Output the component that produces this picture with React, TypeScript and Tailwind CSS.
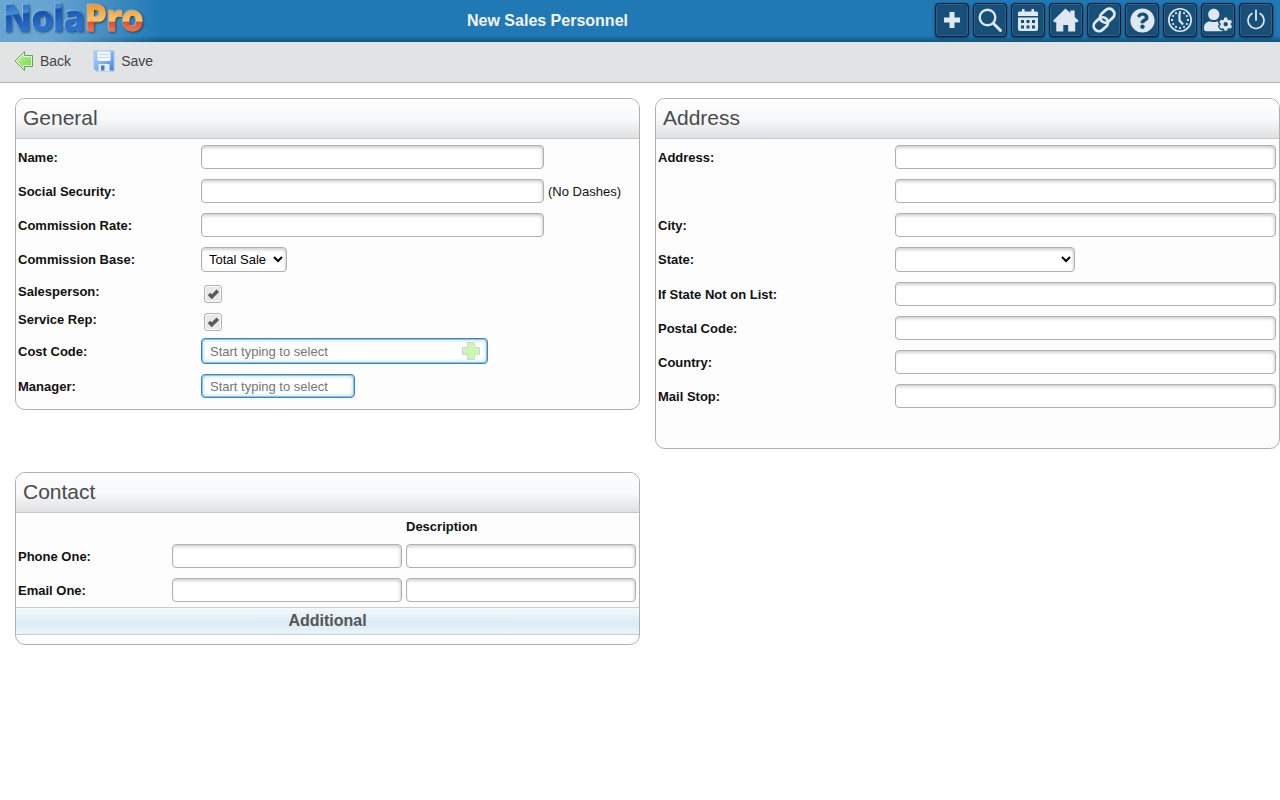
import type { ReactNode } from "react";
import { FaQuestionCircle, FaUserCog } from "react-icons/fa";

const inputClass =
  "h-6 min-w-0 rounded-[4px] border border-[#b0b0b0] bg-white px-2 text-[13px] text-[#222] shadow-[inset_-1px_2px_3px_#d2d2d2] outline-none";
const selectClass =
  "h-[25px] rounded-[4px] border border-[#b0b0b0] bg-white pl-[3px] text-[13px] text-black shadow-[inset_-1px_2px_3px_#d2d2d2] outline-none";
const lookupClass =
  "min-w-0 rounded-[4px] border border-[#3a87c0] bg-white px-2 text-[13px] shadow-[inset_0_0_0_1px_#8cc1e8,inset_0_0_5px_#8fc8f5] outline-none placeholder:text-[#757575]";

function Logo() {
  return (
    <svg className="overflow-visible" width="150" height="42" viewBox="0 0 150 42" role="img" aria-label="NolaPro">
      <defs>
        <linearGradient id="nola" gradientUnits="userSpaceOnUse" x1="0" y1="4" x2="4" y2="32">
          <stop offset="0" stopColor="#2169bd" />
          <stop offset="0.4" stopColor="#3f8fd8" />
          <stop offset="0.46" stopColor="#1553ae" />
          <stop offset="1" stopColor="#2a70cc" />
        </linearGradient>
        <linearGradient id="pro" gradientUnits="userSpaceOnUse" x1="0" y1="4" x2="0" y2="32">
          <stop offset="0" stopColor="#f5921f" />
          <stop offset="0.6" stopColor="#fcc46a" />
          <stop offset="0.66" stopColor="#e0502f" />
          <stop offset="1" stopColor="#f07845" />
        </linearGradient>
        <filter id="logoShadow" x="-10%" y="-10%" width="120%" height="130%">
          <feDropShadow dx="-1" dy="-1" stdDeviation="0.5" floodColor="#a9d2f0" floodOpacity="0.5" />
          <feDropShadow dx="1" dy="1" stdDeviation="1" floodColor="#1b2f48" floodOpacity="0.8" />
        </filter>
      </defs>
      <g
        fontFamily="'Noto Sans', sans-serif"
        fontWeight="700"
        fontSize="35"
        strokeWidth="1"
        filter="url(#logoShadow)"
      >
        <text x="1" y="31" fill="url(#nola)" stroke="url(#nola)">
          Nola
        </text>
        <text x="83" y="31" fill="url(#pro)" stroke="url(#pro)">
          Pro
        </text>
      </g>
    </svg>
  );
}

function PlusIcon() {
  return (
    <svg width="18" height="18" viewBox="0 0 18 18" fill="currentColor">
      <path d="M6.500 1h5v5.500H17v5h-5.500V17h-5v-5.500H1v-5h5.500z" />
    </svg>
  );
}

function SearchIcon() {
  return (
    <svg width="26" height="26" viewBox="0 0 26 26" fill="none" stroke="currentColor">
      <circle cx="10.5" cy="10.5" r="7.8" strokeWidth="2.4" />
      <path d="M16.500 16.500 23.500 23.500" strokeWidth="3" strokeLinecap="round" />
    </svg>
  );
}

function CalendarIcon() {
  return (
    <svg width="22" height="24" viewBox="0 0 22 24" fill="currentColor">
      <path d="M5 1h2.500v2.500h7V1H17v2.500h2.500a1.500 1.500 0 0 1 1.500 1.500V8H1V5a1.500 1.500 0 0 1 1.500-1.500H5z" />
      <path
        fillRule="evenodd"
        d="M1 9.500h20V21a2 2 0 0 1-2 2H3a2 2 0 0 1-2-2zM4 12v3h3v-3zM9.500 12v3h3v-3zM15 12v3h3v-3zM4 17.500v3h3v-3zM9.500 17.500v3h3v-3zM15 17.500v3h3v-3z"
      />
    </svg>
  );
}

function HomeIcon() {
  return (
    <svg width="26" height="24" viewBox="0 0 24 24" preserveAspectRatio="none" fill="currentColor">
      <path d="M11.500.5 16 5V2.500h4V9l3.700 3.800-1.500 1.700L20.500 14v9.500H14V17H9.500v6.500H3V14l-1.500.5L0 12.800z" />
    </svg>
  );
}

function LinkIcon() {
  return (
    <svg width="26" height="26" viewBox="0 0 26 26" fill="none" stroke="currentColor" strokeWidth="2.800">
      <rect x="8.500" y="3.500" width="15.500" height="10.500" rx="5.200" transform="rotate(-42 16.200 8.700)" />
      <rect x="2" y="12" width="15.500" height="10.500" rx="5.200" transform="rotate(-42 9.800 17.200)" />
    </svg>
  );
}

function ClockIcon() {
  const ticks = [0, 30, 60, 90, 120, 150, 180, 210, 240, 270, 300, 330];

  return (
    <svg width="26" height="26" viewBox="0 0 26 26" fill="none" stroke="currentColor">
      <circle cx="13" cy="13" r="11.2" strokeWidth="1.6" />
      {ticks.map((angle) => (
        <path key={angle} d="M13 4v2" strokeWidth="1.8" transform={`rotate(${angle} 13 13)`} />
      ))}
      <path d="M12.500 6v7.500l3.500 4" strokeWidth="2.2" />
    </svg>
  );
}

function PowerIcon() {
  return (
    <svg width="20" height="22" viewBox="0 0 20 22" fill="none" stroke="currentColor" strokeLinecap="round">
      <path d="M6 4.500a8 8 0 1 0 8 0" strokeWidth="1.6" />
      <path d="M10 1.500v9.500" strokeWidth="1.8" />
    </svg>
  );
}

function BackIcon() {
  return (
    <svg width="20" height="22" viewBox="0 0 20 22">
      <defs>
        <linearGradient id="backFill" x1="0" y1="0" x2="1" y2="1">
          <stop offset="0" stopColor="#c4f09c" />
          <stop offset="1" stopColor="#72dc48" />
        </linearGradient>
      </defs>
      <path
        d="M1 11 10.500 1.500V5.500H18.500V16.500H10.500V20.500z"
        fill="#e4f7d8"
        stroke="#5fa552"
        strokeLinejoin="round"
      />
      <path d="M3 11 9.500 4.500V7H17V15H9.500V17.500z" fill="url(#backFill)" />
    </svg>
  );
}

function SaveIcon() {
  return (
    <svg width="22" height="22" viewBox="0 0 22 22">
      <defs>
        <linearGradient id="diskFill" x1="0" y1="0" x2="1" y2="1">
          <stop offset="0" stopColor="#b4d6fb" />
          <stop offset="0.5" stopColor="#7fb2f3" />
          <stop offset="1" stopColor="#3f7fe0" />
        </linearGradient>
      </defs>
      <path d="M1 1h20v20H3l-2-2z" fill="url(#diskFill)" stroke="#9cc3f5" />
      <path d="M4.500 1.500h13V11h-13z" fill="#f4f8fe" />
      <path d="M6 4.500h10M6 7.500h10" stroke="#c3d8f4" />
      <path d="M5.500 14h11v7h-11z" fill="#e4edf9" />
      <path d="M8 15.500h3.500v5H8z" fill="#4a78c4" />
    </svg>
  );
}

const navItems = [
  { label: "Add", icon: <PlusIcon /> },
  { label: "Search", icon: <SearchIcon /> },
  { label: "Calendar", icon: <CalendarIcon /> },
  { label: "Home", icon: <HomeIcon /> },
  { label: "Links", icon: <LinkIcon /> },
  { label: "Help", icon: <FaQuestionCircle size={25} /> },
  { label: "Time Clock", icon: <ClockIcon /> },
  { label: "User Settings", icon: <FaUserCog size={28} /> },
  { label: "Log Out", icon: <PowerIcon /> },
];

function Card({ title, children }: { title: string; children: ReactNode }) {
  return (
    <section className="overflow-hidden rounded-[10px] border border-[#b0b0b0] bg-[#fdfdfd]">
      <h2 className="h-10 border-b border-[#c4c6c8] bg-linear-to-b from-[#fdfdfe] via-[#f8f9fb] to-[#dfe0e2] pl-[7px] text-[21px] leading-[38px] text-[#4a4a4a]">
        {title}
      </h2>
      {children}
    </section>
  );
}

function Row({
  id,
  label,
  labelWidth,
  height = "h-[34px]",
  children,
}: {
  id: string;
  label: string;
  labelWidth: string;
  height?: string;
  children: ReactNode;
}) {
  return (
    <div className={`flex items-center pr-[3px] ${height}`}>
      <label htmlFor={id} className={`shrink-0 pt-px pl-[2px] font-bold ${labelWidth}`}>
        {label}
      </label>
      {children}
    </div>
  );
}

function CheckBox({ id }: { id: string }) {
  return (
    <span className="relative mt-1.5 ml-[3px] size-[18px]">
      <input
        id={id}
        type="checkbox"
        defaultChecked
        className="peer block size-[18px] appearance-none rounded-[3px] border border-[#b4b4b4] bg-[#e8e8e8] shadow-[inset_0_0_0_1px_#fafafa]"
      />
      <svg
        className="pointer-events-none absolute inset-0 hidden peer-checked:block"
        width="18"
        height="18"
        viewBox="0 0 18 18"
      >
        <path d="M5 9 7.800 11.800 13.800 5.800" fill="none" stroke="#5a5a5a" strokeWidth="3.5" />
      </svg>
    </span>
  );
}

const addressRows = [
  { id: "city", label: "City:" },
  { id: "state", label: "State:" },
  { id: "otherState", label: "If State Not on List:" },
  { id: "postalCode", label: "Postal Code:" },
  { id: "country", label: "Country:" },
  { id: "mailStop", label: "Mail Stop:" },
];

const contactRows = [
  { id: "phoneOne", label: "Phone One:" },
  { id: "emailOne", label: "Email One:" },
];

export default function App() {
  return (
    <div className="min-h-screen bg-white font-['Liberation_Sans',Arial,sans-serif] text-[13px] leading-5 text-[#111]">
      <header className="flex h-[42px] items-center bg-linear-to-b from-[#2079b5] from-85% to-[#12547f] pr-[7px]">
        <div className="h-full w-40 shrink-0 bg-linear-to-r from-[#68a5d1] from-30% to-transparent pl-[2px]">
          <Logo />
        </div>
        <h1 className="flex-1 text-center text-base font-bold text-[#f2f6fa]">New Sales Personnel</h1>
        <nav className="flex gap-1">
          {navItems.map((item) => (
            <button
              key={item.label}
              type="button"
              aria-label={item.label}
              className="mb-[2px] flex size-[34px] items-center justify-center rounded-[4px] border border-[#061a2b] bg-[#174f78] text-[#dfe8f1] shadow-[inset_0_0_0_1px_#2a6590,0_1px_3px_#0b3557]"
            >
              {item.icon}
            </button>
          ))}
        </nav>
      </header>

      <div className="flex h-[41px] items-center gap-[22px] border-b border-[#b4b4b4] bg-[#e2e3e5] pb-[2px] pl-[14px] text-sm text-[#444]">
        <button type="button" className="flex items-center gap-1.5">
          <BackIcon />
          Back
        </button>
        <button type="button" className="flex items-center gap-1.5">
          <SaveIcon />
          Save
        </button>
      </div>

      <main className="grid grid-cols-2 items-start gap-x-[15px] gap-y-[23px] pt-[15px] pl-[15px]">
        <Card title="General">
          <div className="pt-px pb-1.5">
            <Row id="name" label="Name:" labelWidth="w-[185px]">
              <input id="name" type="text" className={`w-[343px] ${inputClass}`} />
            </Row>
            <Row id="ssn" label="Social Security:" labelWidth="w-[185px]">
              <input id="ssn" type="text" className={`w-[343px] ${inputClass}`} />
              <span className="pt-px pl-1 whitespace-nowrap">(No Dashes)</span>
            </Row>
            <Row id="rate" label="Commission Rate:" labelWidth="w-[185px]">
              <input id="rate" type="text" className={`w-[343px] ${inputClass}`} />
            </Row>
            <Row id="base" label="Commission Base:" labelWidth="w-[185px]" height="h-[35px]">
              <select id="base" className={`w-[86px] ${selectClass}`}>
                <option>Total Sale</option>
              </select>
            </Row>
            <Row id="salesperson" label="Salesperson:" labelWidth="w-[185px]" height="h-7">
              <CheckBox id="salesperson" />
            </Row>
            <Row id="serviceRep" label="Service Rep:" labelWidth="w-[185px]" height="h-7">
              <CheckBox id="serviceRep" />
            </Row>
            <Row id="costCode" label="Cost Code:" labelWidth="w-[185px]" height="h-9">
              <span className="relative w-[287px]">
                <input
                  id="costCode"
                  type="text"
                  placeholder="Start typing to select"
                  className={`block h-[26px] w-full ${lookupClass}`}
                />
                <button type="button" aria-label="Add cost code" className="absolute top-1 right-2">
                  <svg width="18" height="18" viewBox="0 0 18 18">
                    <path
                      d="M5.500.5h7v5h5v7h-5v5h-7v-5h-5v-7h5z"
                      fill="#cdf5b6"
                      stroke="#c8ddbf"
                      strokeLinejoin="round"
                    />
                  </svg>
                </button>
              </span>
            </Row>
            <Row id="manager" label="Manager:" labelWidth="w-[185px]">
              <input
                id="manager"
                type="text"
                placeholder="Start typing to select"
                className={`h-6 w-[154px] ${lookupClass}`}
              />
            </Row>
          </div>
        </Card>

        <Card title="Address">
          <div className="pt-px pb-[35px]">
            <Row id="address1" label="Address:" labelWidth="w-[239px]">
              <input id="address1" type="text" className={`flex-1 ${inputClass}`} />
            </Row>
            <div className="flex h-[34px] items-center pr-[3px] pl-[239px]">
              <input id="address2" type="text" aria-label="Address line 2" className={`flex-1 ${inputClass}`} />
            </div>
            {addressRows.map((row) => (
              <Row
                key={row.id}
                id={row.id}
                label={row.label}
                labelWidth="w-[239px]"
                height={row.id === "state" ? "h-[35px]" : "h-[34px]"}
              >
                {row.id === "state" ? (
                  <select id={row.id} className={`w-[180px] ${selectClass}`}>
                    <option></option>
                  </select>
                ) : (
                  <input id={row.id} type="text" className={`flex-1 ${inputClass}`} />
                )}
              </Row>
            ))}
          </div>
        </Card>

        <Card title="Contact">
          <div className="flex h-[26px] items-center gap-1 pt-px pr-[3px] pl-[156px] font-bold">
            <span className="flex-1" />
            <span className="flex-1">Description</span>
          </div>
          {contactRows.map((row) => (
            <Row key={row.id} id={row.id} label={row.label} labelWidth="w-[156px]">
              <div className="flex min-w-0 flex-1 gap-1">
                <input id={row.id} type="text" className={`flex-1 ${inputClass}`} />
                <input type="text" aria-label={`${row.label} description`} className={`flex-1 ${inputClass}`} />
              </div>
            </Row>
          ))}
          <button
            type="button"
            className="mb-[9px] block h-7 w-full border-y border-[#c5ced6] bg-linear-to-b from-[#f3f9fc] from-0% via-[#dcebf5] via-55% to-[#eaf4fa] text-base leading-[26px] font-bold text-[#555]"
          >
            Additional
          </button>
        </Card>
      </main>
    </div>
  );
}
